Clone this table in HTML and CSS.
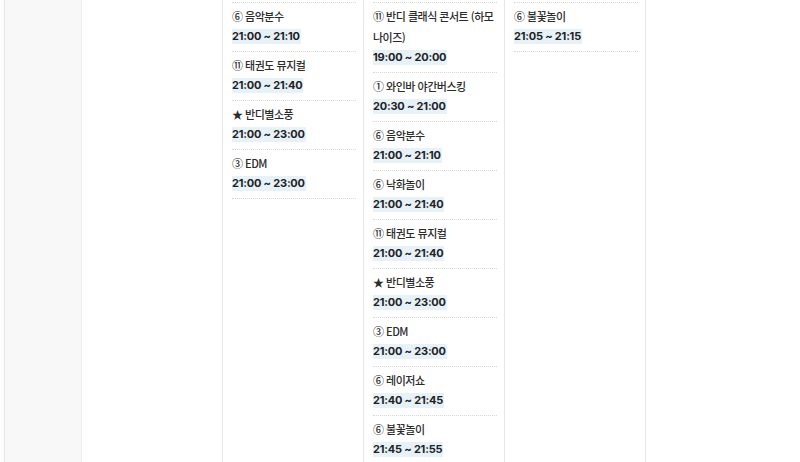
FILE: index.html
```html
<!DOCTYPE html>
<html lang="ko">
<head>
    <meta charset="UTF-8">
    <meta name="viewport" content="width=device-width, initial-scale=1.0">
    <title>반디축제 시간표</title>
    <link rel="stylesheet" href="styles.css">
</head>
<body>
    <div class="page">
        <div class="gutter"></div>
        <div class="side"></div>

        <div class="schedule">
            <div class="day"></div>

            <div class="day">
                <div class="event">
                    <div class="title">⑥ 음악분수</div>
                    <div class="time"><span>21:00 ~ 21:10</span></div>
                </div>
                <div class="event">
                    <div class="title">⑪ 태권도 뮤지컬</div>
                    <div class="time"><span>21:00 ~ 21:40</span></div>
                </div>
                <div class="event">
                    <div class="title">★ 반디별소풍</div>
                    <div class="time"><span>21:00 ~ 23:00</span></div>
                </div>
                <div class="event">
                    <div class="title">③ EDM</div>
                    <div class="time"><span>21:00 ~ 23:00</span></div>
                </div>
            </div>

            <div class="day">
                <div class="event">
                    <div class="title">⑪ 반디 클래식 콘서트 (하모나이즈)</div>
                    <div class="time"><span>19:00 ~ 20:00</span></div>
                </div>
                <div class="event">
                    <div class="title">① 와인바 야간버스킹</div>
                    <div class="time"><span>20:30 ~ 21:00</span></div>
                </div>
                <div class="event">
                    <div class="title">⑥ 음악분수</div>
                    <div class="time"><span>21:00 ~ 21:10</span></div>
                </div>
                <div class="event">
                    <div class="title">⑥ 낙화놀이</div>
                    <div class="time"><span>21:00 ~ 21:40</span></div>
                </div>
                <div class="event">
                    <div class="title">⑪ 태권도 뮤지컬</div>
                    <div class="time"><span>21:00 ~ 21:40</span></div>
                </div>
                <div class="event">
                    <div class="title">★ 반디별소풍</div>
                    <div class="time"><span>21:00 ~ 23:00</span></div>
                </div>
                <div class="event">
                    <div class="title">③ EDM</div>
                    <div class="time"><span>21:00 ~ 23:00</span></div>
                </div>
                <div class="event">
                    <div class="title">⑥ 레이저쇼</div>
                    <div class="time"><span>21:40 ~ 21:45</span></div>
                </div>
                <div class="event">
                    <div class="title">⑥ 불꽃놀이</div>
                    <div class="time"><span>21:45 ~ 21:55</span></div>
                </div>
            </div>

            <div class="day">
                <div class="event">
                    <div class="title">⑥ 불꽃놀이</div>
                    <div class="time"><span>21:05 ~ 21:15</span></div>
                </div>
            </div>

            <div class="day"></div>
        </div>
    </div>
</body>
</html>
```

FILE: styles.css
```css
html, body {
    margin: 0;
    height: 100%;
    overflow: hidden;
}
body {
    font-family: "Noto Sans CJK KR", "Noto Sans", sans-serif;
    background-color: #fff;
    color: #333;
}
.page {
    display: flex;
    height: 100%;
}
.gutter {
    width: 4px;
    background-color: #fdfdfd;
}
.side {
    width: 76px;
    background-color: #f8f8f8;
    border-left: 1px solid #e6e6e6;
    border-right: 1px solid #ececec;
}
.schedule {
    display: grid;
    grid-template-columns: repeat(5, 141px);
}
.day {
    border-right: 1px solid #e8e8e8;
    padding: 2px 7px 0 9px;
}
.day:last-child {
    border-right: none;
}
.event {
    border-top: 1px dotted #d8d8d8;
    padding: 3px 0 5px;
}
.event:last-child {
    border-bottom: 1px dotted #d8d8d8;
}
.title {
    font-size: 11px;
    font-weight: 500;
    line-height: 21px;
    letter-spacing: -0.5px;
    color: #2b2b2b;
}
.time {
    display: flex;
    align-items: flex-start;
    height: 19px;
}
.time span {
    margin-top: 2px;
    padding: 0 1px 0 0;
    font-family: Inter, "Noto Sans", sans-serif;
    font-size: 11px;
    line-height: 15px;
    font-weight: 700;
    letter-spacing: -0.2px;
    color: #222;
    background-color: #e6f1f8;
}
```
